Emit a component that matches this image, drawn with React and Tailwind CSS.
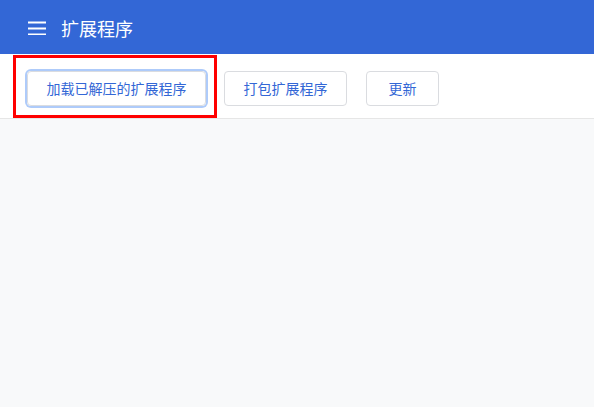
export default function App() {
  return (
    <div
      className="relative w-[594px] h-[407px] bg-[#f8f9fa] overflow-hidden"
      style={{ fontFamily: '"Noto Sans", "Noto Sans CJK SC", sans-serif' }}
    >
      <header className="h-[54px] bg-[#3367d6] flex items-center pl-[28px]">
        <svg width="18" height="14" viewBox="0 0 18 14" className="mt-[2px]">
          <rect x="0" y="0.5" width="18" height="2" fill="#fff" />
          <rect x="0" y="6.5" width="18" height="2" fill="#fff" />
          <rect x="0" y="12.5" width="18" height="2" fill="#fff" />
        </svg>
        <span className="ml-[15px] text-[18px] text-white leading-none mt-[4px]">扩展程序</span>
      </header>
      <div className="h-[65px] bg-white border-b border-[#e6e6e6] flex items-start pt-[17px] pl-[27px]">
        <button className="w-[179px] h-[35px] rounded-[4px] border border-[#dadce0] ring-2 ring-[#aecbfa] text-[14px] text-[#3367d6] flex items-center justify-center">
          加载已解压的扩展程序
        </button>
        <button className="ml-[18px] w-[123px] h-[35px] rounded-[4px] border border-[#dadce0] text-[14px] text-[#3367d6] flex items-center justify-center">
          打包扩展程序
        </button>
        <button className="ml-[19px] w-[73px] h-[35px] rounded-[4px] border border-[#dadce0] text-[14px] text-[#3367d6] flex items-center justify-center">
          更新
        </button>
      </div>
      <div className="absolute left-[13px] top-[55px] w-[204px] h-[63px] border-[3px] border-[#ff0000] pointer-events-none" />
    </div>
  );
}
